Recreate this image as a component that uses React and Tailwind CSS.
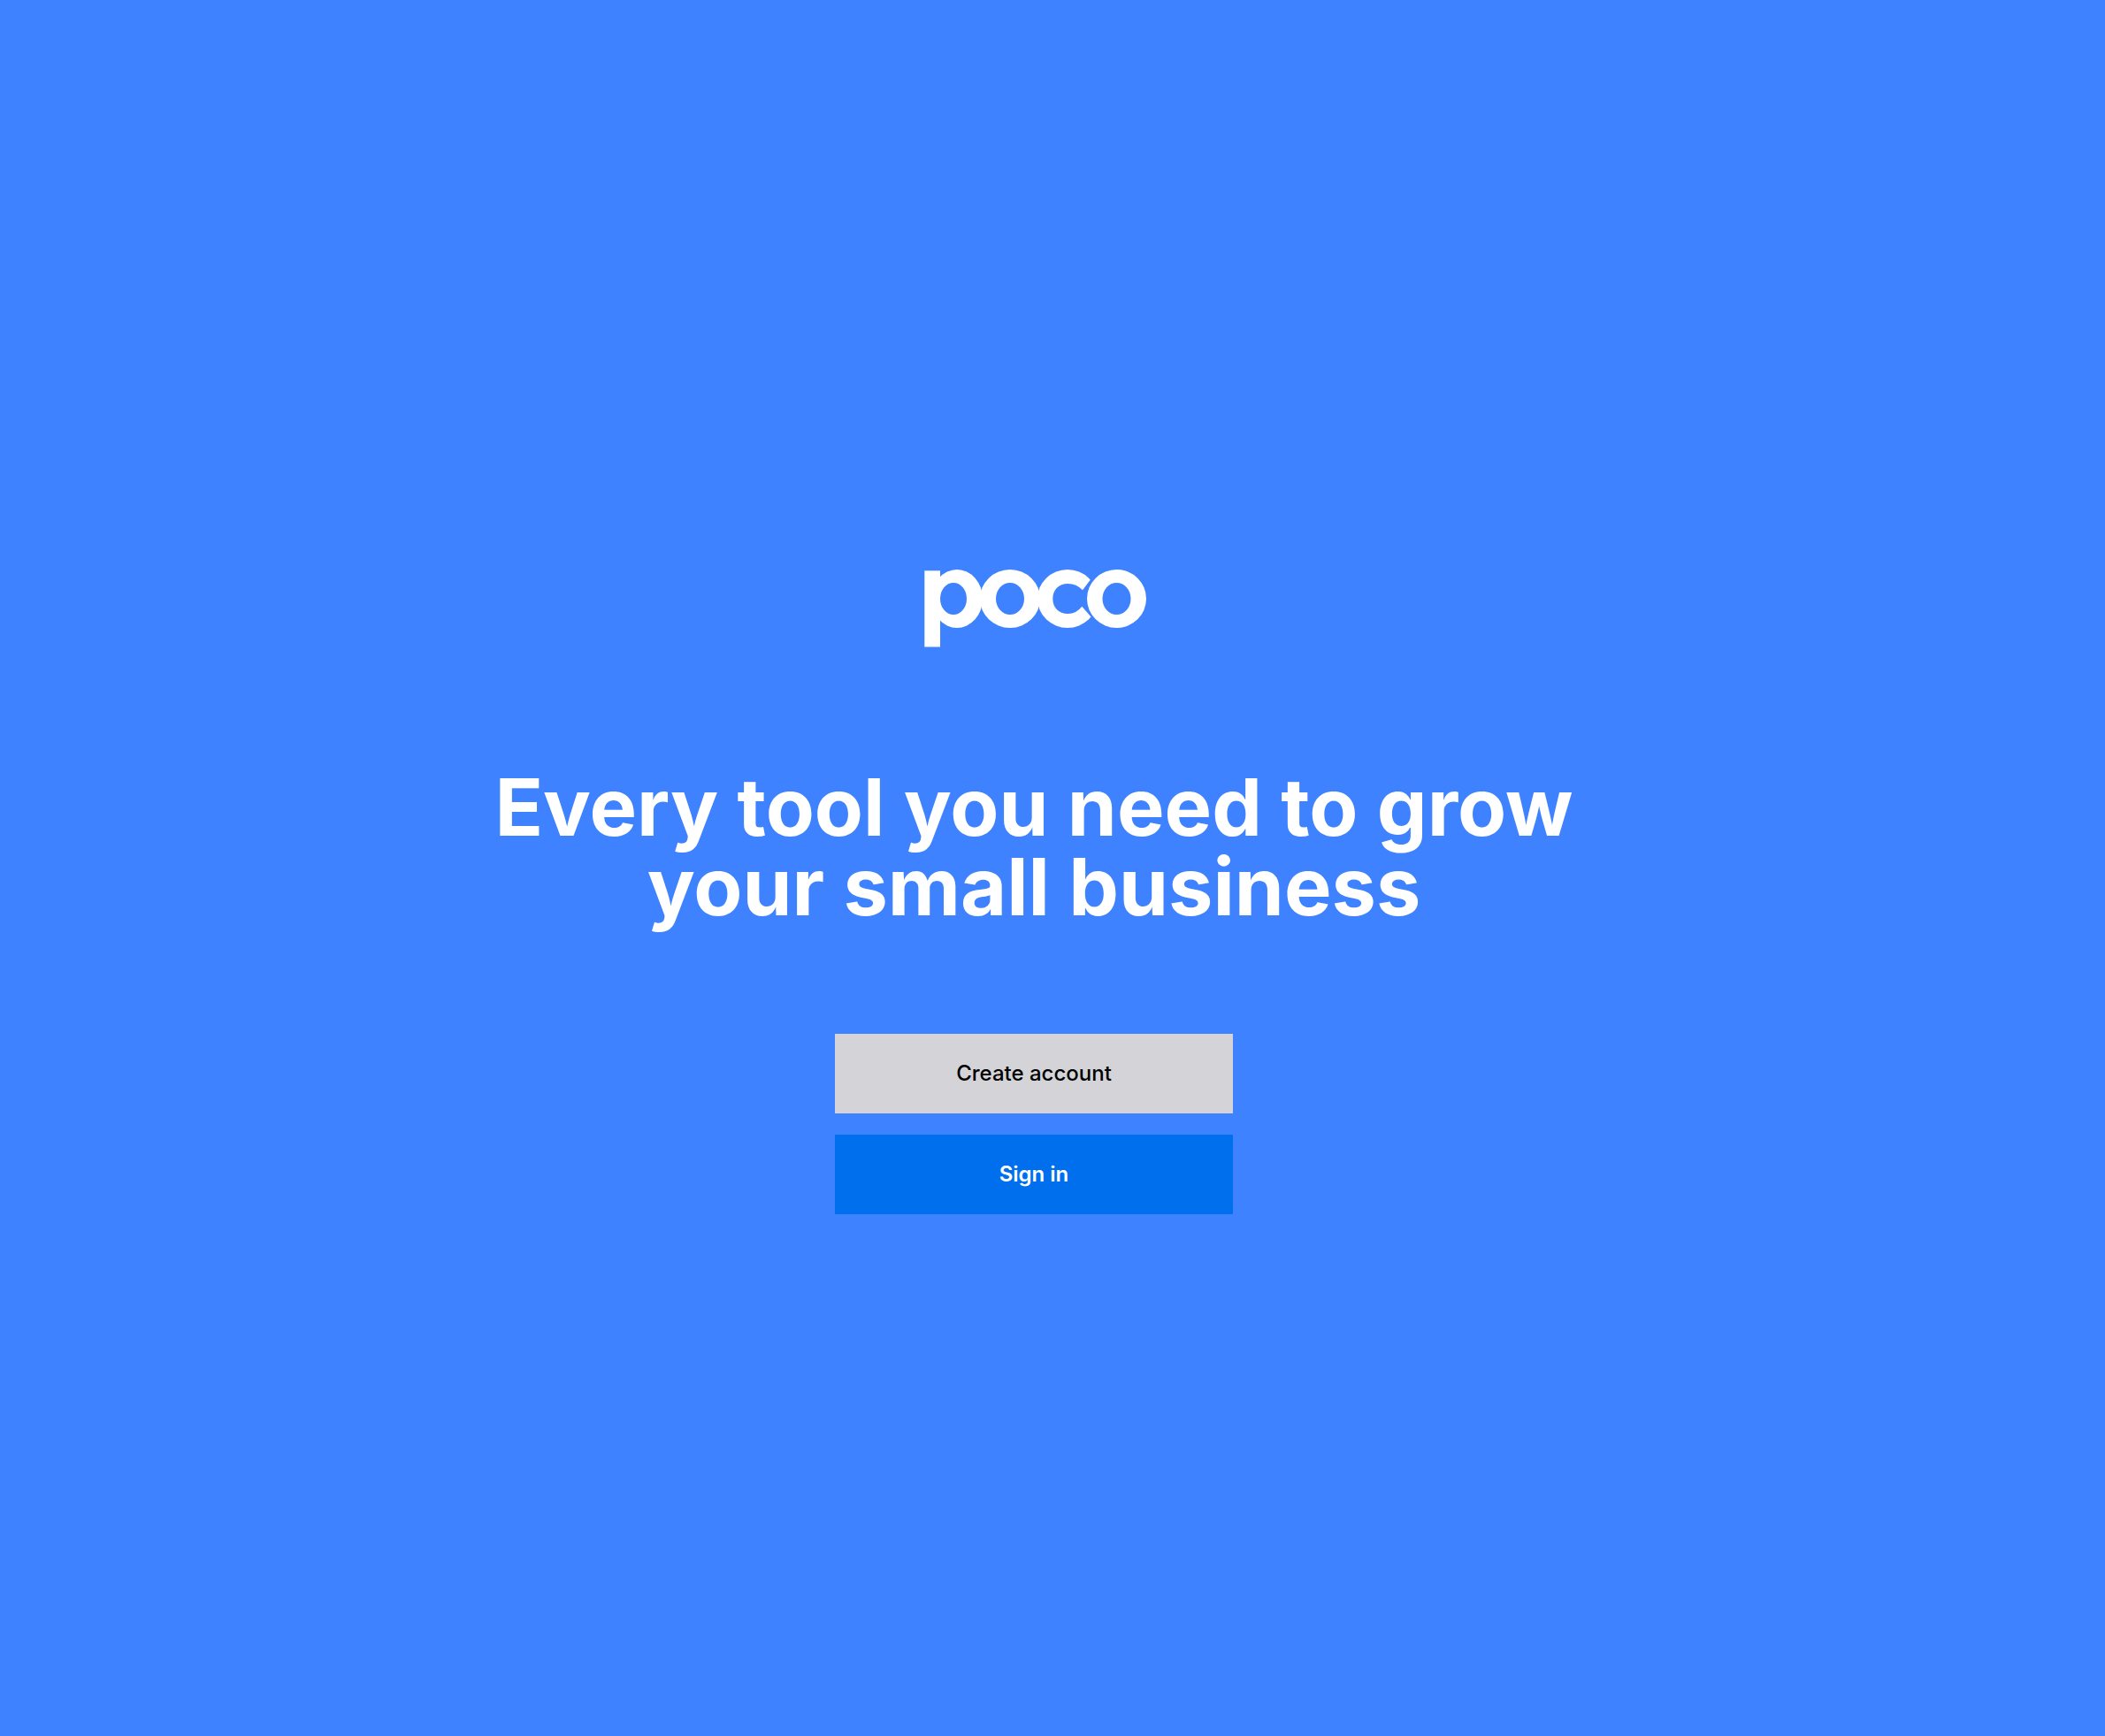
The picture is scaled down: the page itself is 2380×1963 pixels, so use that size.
function Logo() {
  return (
    <svg viewBox="0 0 278 110" className="h-[110px] w-[278px]" role="img" aria-label="poco" fill="white">
      <mask id="counters">
        <rect width="278" height="110" fill="white" />
        <ellipse cx="48" cy="47" rx="15" ry="18" fill="black" />
        <ellipse cx="112" cy="47" rx="16" ry="18" fill="black" />
        <path
          d="M202.7 25.7 L194 37.3 Q187 30 177.5 30 C167 30 160.3 37 160.3 47 S167 64 177.5 64 Q187 64 193.3 55.7 L203.3 67.3 L216 67 V25 Z"
          fill="black"
        />
      </mask>
      <g mask="url(#counters)">
        <rect x="15.3" y="15.3" width="17.7" height="86.2" />
        <ellipse cx="52" cy="47" rx="29" ry="33" />
        <ellipse cx="112" cy="47" rx="34" ry="33" />
        <ellipse cx="177" cy="47" rx="34" ry="33" />
      </g>
      <path
        fillRule="evenodd"
        d="M199 47 a33.5 33 0 1 0 67 0 a33.5 33 0 1 0 -67 0 Z M216.5 47 a16 18 0 1 1 32 0 a16 18 0 1 1 -32 0 Z"
      />
    </svg>
  );
}

export default function App() {
  return (
    <main className="flex min-h-screen flex-col items-center justify-center bg-[#3e82ff] pr-[42px] font-['Inter',sans-serif]">
      <div className="pt-10">
        <Logo />
      </div>

      <h1 className="mt-32 max-w-[1300px] text-center text-[90px] leading-[90px] font-bold text-white">
        Every tool you need to grow your small business
      </h1>

      {/* Actions */}
      <div className="mt-[121px] flex w-[450px] flex-col gap-6">
        <button type="button" className="h-[90px] bg-[#d4d4d8] text-2xl font-medium text-black">
          Create account
        </button>
        <button type="button" className="h-[90px] bg-[#006fee] text-2xl font-semibold text-white">
          Sign in
        </button>
      </div>
    </main>
  );
}
